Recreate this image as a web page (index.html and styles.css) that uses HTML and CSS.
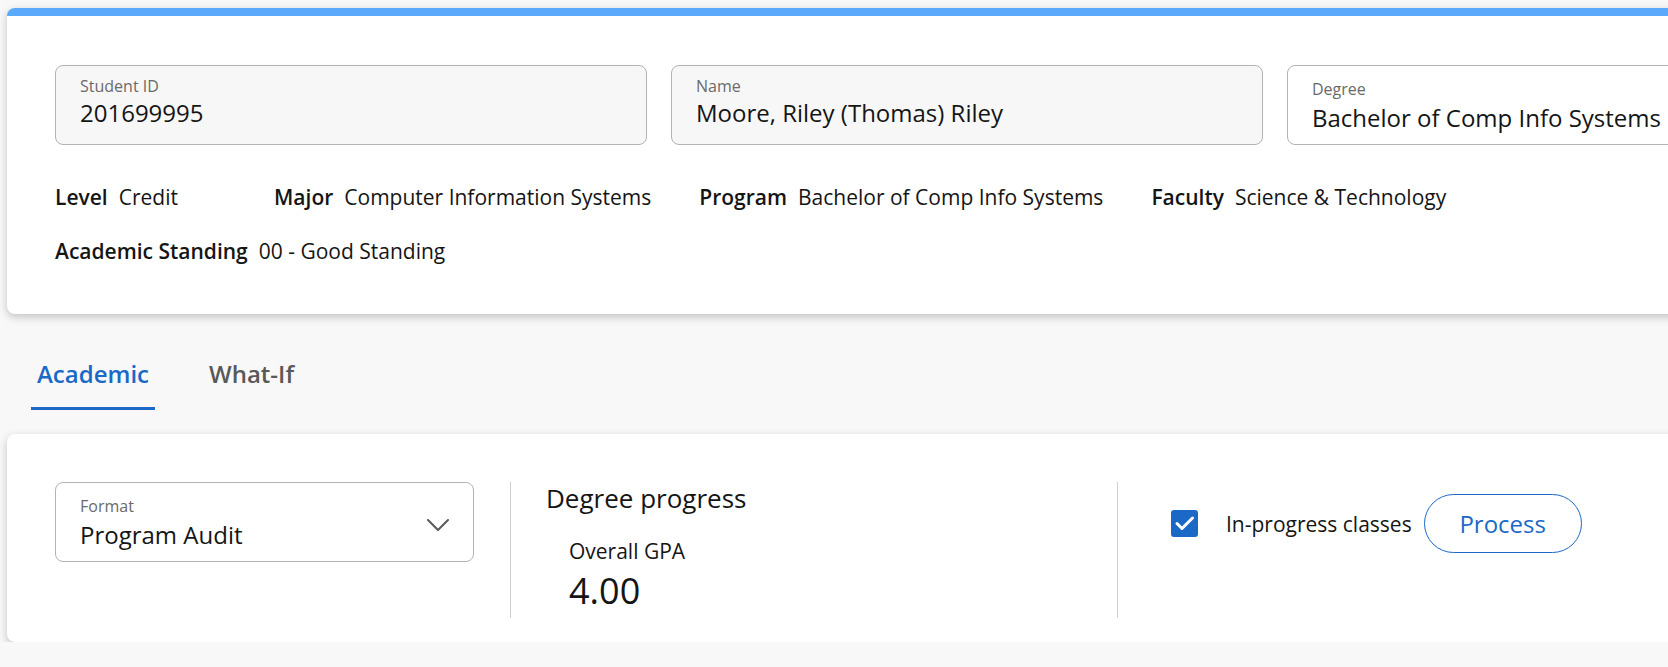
FILE: index.html
```html
<!DOCTYPE html>
<html lang="en">
<head>
<meta charset="utf-8">
<title>Degree Audit</title>
<link rel="stylesheet" href="styles.css">
</head>
<body>
<main class="page">
  <section class="card student-card">
    <div class="fields">
      <div class="field field--readonly">
        <span class="field-label">Student ID</span>
        <span class="field-value">201699995</span>
      </div>
      <div class="field field--readonly">
        <span class="field-label">Name</span>
        <span class="field-value">Moore, Riley (Thomas) Riley</span>
      </div>
      <div class="field field--select">
        <span class="field-label">Degree</span>
        <span class="field-value">Bachelor of Comp Info Systems</span>
      </div>
    </div>
    <div class="info">
      <div class="info-row">
        <div class="info-item"><span class="info-label">Level</span><span class="info-value">Credit</span></div>
        <div class="info-item"><span class="info-label">Major</span><span class="info-value">Computer Information Systems</span></div>
        <div class="info-item"><span class="info-label">Program</span><span class="info-value">Bachelor of Comp Info Systems</span></div>
        <div class="info-item"><span class="info-label">Faculty</span><span class="info-value">Science &amp; Technology</span></div>
      </div>
      <div class="info-row">
        <div class="info-item"><span class="info-label">Academic Standing</span><span class="info-value">00 - Good Standing</span></div>
      </div>
    </div>
  </section>

  <nav class="tabs">
    <div class="tab tab--active">Academic</div>
    <div class="tab">What-If</div>
  </nav>

  <section class="card audit-card">
    <div class="format-col">
      <div class="field field--select field--format">
        <div class="field-text">
          <span class="field-label">Format</span>
          <span class="field-value">Program Audit</span>
        </div>
        <svg class="chevron" width="22" height="13" viewBox="0 0 22 13" aria-hidden="true">
          <path d="M1 1 L11 11 L21 1" fill="none" stroke="#5a5a5a" stroke-width="2" stroke-linecap="round" stroke-linejoin="round"/>
        </svg>
      </div>
    </div>
    <div class="progress-col">
      <h2 class="progress-title">Degree progress</h2>
      <div class="gpa">
        <div class="gpa-label">Overall GPA</div>
        <div class="gpa-value">4.00</div>
      </div>
    </div>
    <div class="actions-col">
      <div class="actions-row">
        <label class="check">
          <span class="checkbox">
            <svg width="27" height="27" viewBox="0 0 27 27" aria-hidden="true">
              <path d="M6 13.5 L11 18.5 L21.5 8" fill="none" stroke="#ffffff" stroke-width="3" stroke-linecap="round" stroke-linejoin="round"/>
            </svg>
          </span>
          <span class="check-text">In-progress classes</span>
        </label>
        <button class="btn-outline" type="button">Process</button>
      </div>
    </div>
  </section>
</main>
</body>
</html>
```

FILE: styles.css
```css
html, body {
  margin: 0;
  padding: 0;
  overflow: hidden;
}

body {
  background: #f8f8f8;
  font-family: "Open Sans", "Noto Sans", sans-serif;
  color: #151515;
}

.page {
  padding: 8px 0 0 7px;
  width: 1920px;
}

.card {
  background: #ffffff;
  border-radius: 8px;
  box-shadow: 0 3px 9px rgba(0, 0, 0, 0.22);
  width: 1920px;
  box-sizing: border-box;
}

.student-card {
  border-top: 8px solid #5aa9fa;
  padding: 49px 48px 49px;
}

.fields {
  display: grid;
  grid-template-columns: repeat(3, 592px);
  gap: 24px;
}

.field {
  box-sizing: border-box;
  height: 80px;
  border: 1px solid #b3b3b3;
  border-radius: 8px;
  padding: 9px 24px 0;
  display: flex;
  flex-direction: column;
}

.field--readonly {
  background: #f7f7f7;
}

.field--select {
  background: #ffffff;
  padding-top: 12px;
}

.field-label {
  font-size: 16px;
  line-height: 22px;
  color: #6a6a6a;
}

.field-value {
  font-size: 24px;
  line-height: 30px;
  color: #151515;
  margin-top: 1px;
  white-space: nowrap;
}

.field--select .field-value {
  margin-top: 3px;
}

.info {
  margin-top: 38px;
  display: flex;
  flex-direction: column;
  gap: 26px;
}

.info-row {
  display: flex;
  gap: 48px;
}

.info-item {
  display: flex;
  gap: 11px;
  min-width: 171px;
  font-size: 21px;
  line-height: 28px;
  white-space: nowrap;
}

.info-label {
  font-weight: 600;
}

.tabs {
  display: flex;
  gap: 48px;
  margin: 32px 0 0 24px;
}

.tab {
  font-size: 24px;
  line-height: 32px;
  font-weight: 600;
  color: #595959;
  padding: 12px 6px 17px;
  border-bottom: 3px solid transparent;
}

.tab--active {
  color: #1a69c7;
  border-bottom-color: #1a69c7;
}

.audit-card {
  margin-top: 24px;
  padding: 48px 0 24px;
  display: flex;
  align-items: stretch;
}

.format-col {
  padding: 0 36px 0 48px;
}

.field--format {
  width: 419px;
  flex-direction: row;
  align-items: flex-start;
  justify-content: space-between;
  padding-right: 24px;
}

.field-text {
  display: flex;
  flex-direction: column;
}

.chevron {
  margin-top: 24px;
}

.progress-col {
  width: 607px;
  border-left: 1px solid #cfcfcf;
  padding: 0 0 7px 35px;
  box-sizing: border-box;
}

.progress-title {
  margin: 0;
  font-size: 26px;
  line-height: 32px;
  font-weight: 400;
}

.gpa {
  margin: 23px 0 0 23px;
}

.gpa-label {
  font-size: 21px;
  line-height: 28px;
}

.gpa-value {
  margin-top: 6px;
  font-size: 36px;
  line-height: 40px;
}

.actions-col {
  border-left: 1px solid #cfcfcf;
  padding: 12px 0 0 53px;
}

.actions-row {
  display: flex;
  align-items: center;
  height: 59px;
}

.check {
  display: flex;
  align-items: center;
}

.checkbox {
  width: 27px;
  height: 27px;
  border-radius: 3px;
  background: #1a69c7;
  display: block;
}

.checkbox svg {
  display: block;
}

.check-text {
  margin-left: 28px;
  font-size: 21px;
  line-height: 28px;
}

.btn-outline {
  margin-left: 12px;
  width: 158px;
  height: 59px;
  border: 1px solid #1a69c7;
  border-radius: 30px;
  background: #ffffff;
  color: #1a69c7;
  font-family: "Open Sans", "Noto Sans", sans-serif;
  font-size: 24px;
  font-weight: 500;
  padding: 0;
}
```
